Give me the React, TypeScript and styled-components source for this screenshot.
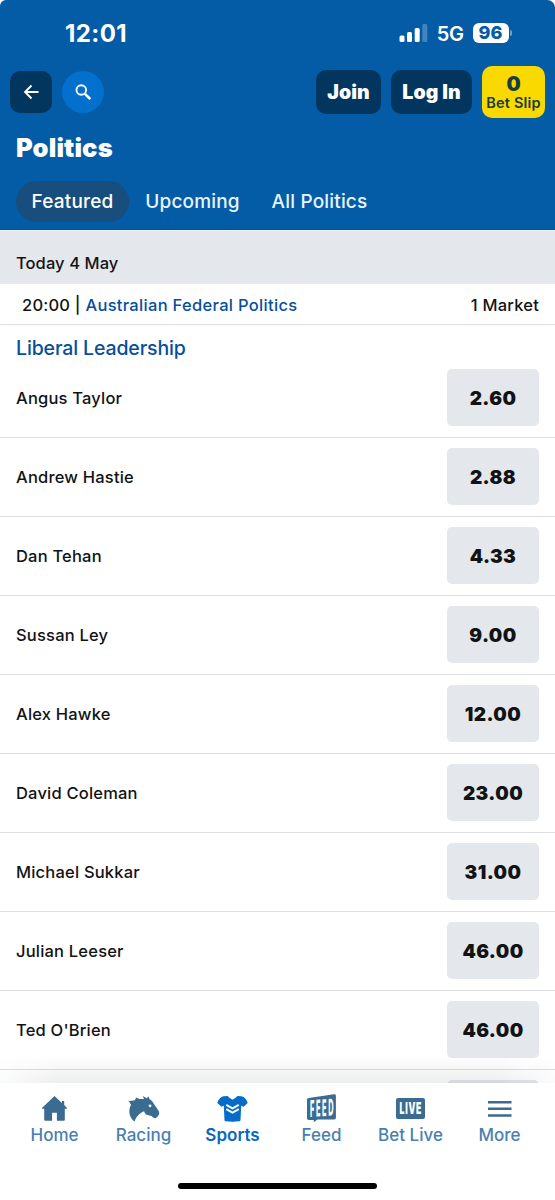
import React from "react";
import styled, { createGlobalStyle } from "styled-components";

const GlobalStyle = createGlobalStyle`
  * { box-sizing: border-box; }
  body { margin: 0; background: #fff; }
  button { font: inherit; border: 0; margin: 0; padding: 0; letter-spacing: inherit; }
`;

const Screen = styled.div`
  width: 555px;
  height: 1200px;
  display: flex;
  flex-direction: column;
  overflow: hidden;
  background: #fff;
  color: #111315;
  font-family: Inter, "Liberation Sans", sans-serif;
  font-weight: 500;
  white-space: nowrap;
`;

const Header = styled.header`
  height: 230px;
  flex: none;
  background: #045ba6;
  border-bottom: 1px solid #034f96;
  border-radius: 6px 8px 0 0;
  color: #fff;
`;

const StatusBar = styled.div`
  height: 66px;
  display: flex;
  align-items: center;
  justify-content: space-between;
  padding: 0 43px 0 65px;
`;

const Clock = styled.div`
  font-size: 24px;
  line-height: 30px;
  font-weight: 700;
  letter-spacing: 0.4px;
  padding-top: 1px;
`;

const StatusRight = styled.div`
  display: flex;
  align-items: center;
`;

const Network = styled.span`
  font-size: 20px;
  line-height: 24px;
  font-weight: 600;
  letter-spacing: -0.4px;
  margin: 2px 9px 0 9px;
`;

const Battery = styled.div`
  width: 36px;
  height: 20px;
  border-radius: 6px;
  background: #fff;
  color: #045ba6;
  font-size: 18px;
  line-height: 20px;
  font-weight: 800;
  text-align: center;
`;

const BatteryTip = styled.div`
  width: 2px;
  height: 6px;
  margin-left: 1.5px;
  border-radius: 0 2px 2px 0;
  background: #6ba3d2;
`;

const Toolbar = styled.div`
  height: 52px;
  display: flex;
  align-items: center;
  padding: 0 10px;
`;

const IconButton = styled.button<{ $round?: boolean }>`
  width: 42px;
  height: 42px;
  display: grid;
  place-items: center;
  margin-right: 10px;
  border-radius: ${(p) => (p.$round ? "50%" : "10px")};
  background: ${(p) => (p.$round ? "#0370cd" : "#03365f")};
  color: #fff;
`;

const AccountButton = styled.button<{ $width: number }>`
  width: ${(p) => p.$width}px;
  height: 44px;
  margin-right: 10px;
  border-radius: 10px;
  background: #03365f;
  color: #fff;
  font-size: 19.5px;
  font-weight: 880;
  letter-spacing: 0.05px;
`;

const Spacer = styled.div`
  flex: 1;
`;

const BetSlip = styled.button`
  width: 63px;
  height: 52px;
  display: flex;
  flex-direction: column;
  align-items: center;
  border-radius: 10px;
  background: #f9d900;
  color: #173c46;
`;

const BetCount = styled.span`
  font-size: 20px;
  line-height: 22px;
  font-weight: 900;
  margin-top: 7px;
`;

const BetLabel = styled.span`
  font-size: 14.5px;
  line-height: 15px;
  font-weight: 580;
  letter-spacing: 0.2px;
`;

const Title = styled.h1`
  margin: 0;
  padding: 14px 16px 0;
  font-size: 25.5px;
  line-height: 32px;
  font-weight: 900;
  letter-spacing: 0.15px;
`;

const Tabs = styled.nav`
  display: flex;
  padding: 17px 16px 0;
  height: 59px;
`;

const Tab = styled.button<{ $active?: boolean; $width: number }>`
  width: ${(p) => p.$width}px;
  height: 41px;
  border-radius: 21px;
  background: ${(p) => (p.$active ? "#174e7d" : "transparent")};
  color: ${(p) => (p.$active ? "#fff" : "#e9f5fd")};
  font-size: 19px;
  font-weight: 530;
  letter-spacing: 0.18px;
`;

const DateBar = styled.div`
  height: 54px;
  flex: none;
  padding: 20px 16px 0;
  background: #e4e7ec;
  border-top: 1px solid #eff5fa;
  font-size: 16.5px;
  font-weight: 550;
  line-height: 24px;
  letter-spacing: 0.08px;
`;

const EventBar = styled.div`
  height: 41px;
  flex: none;
  display: flex;
  align-items: center;
  justify-content: space-between;
  padding: 1px 16px 0 22px;
  border-bottom: 1px solid #dfe1e4;
  font-size: 16.5px;
  font-weight: 550;
  letter-spacing: 0.22px;
`;

const EventLink = styled.a`
  color: #064f9a;
  letter-spacing: 0.31px;
`;

const MarketTitle = styled.h2`
  height: 34px;
  flex: none;
  margin: 0;
  padding: 10px 16px 0;
  color: #064f9a;
  font-size: 19.5px;
  line-height: 26px;
  font-weight: 540;
  letter-spacing: -0.13px;
`;

const Runners = styled.main`
  flex: 1;
  min-height: 0;
  overflow: hidden;
`;

const Runner = styled.div`
  height: 79px;
  display: flex;
  align-items: flex-start;
  justify-content: space-between;
  padding: 10px 16px 0;
  border-bottom: 1px solid #dcdee2;
`;

const RunnerName = styled.span`
  font-size: 16.5px;
  font-weight: 550;
  line-height: 59px;
  letter-spacing: 0.2px;
`;

const Odds = styled.button`
  width: 92px;
  height: 57px;
  padding-top: 1px;
  border-radius: 5px;
  background: #e4e7ec;
  color: #111315;
  font-size: 19px;
  font-weight: 880;
  letter-spacing: 0.4px;
`;

const BottomBar = styled.footer`
  position: relative;
  height: 117px;
  flex: none;
  display: flex;
  flex-direction: column;
  align-items: center;
  background: #fff;

  &::before {
    content: "";
    position: absolute;
    left: 0;
    right: 0;
    top: -28px;
    height: 28px;
    background: linear-gradient(to bottom, rgba(20, 30, 45, 0), rgba(20, 30, 45, 0.075));
    mask-image: linear-gradient(to right, rgba(0, 0, 0, 0.2), #000 55px, #000 500px, rgba(0, 0, 0, 0.2));
  }
`;

const NavItems = styled.nav`
  width: 100%;
  height: 100px;
  display: grid;
  grid-template-columns: repeat(6, 89px);
  padding-left: 10px;
`;

const NavItem = styled.a<{ $active?: boolean }>`
  display: flex;
  flex-direction: column;
  align-items: center;
  padding-top: 9px;
  color: ${(p) => (p.$active ? "#0668c1" : "#497fb0")};
  font-size: 17px;
  line-height: 22px;
  font-weight: ${(p) => (p.$active ? 600 : 530)};

  svg {
    display: block;
    flex: none;
    margin-right: 1px;
    color: ${(p) => (p.$active ? "#056ccb" : "#3c6b92")};
  }
`;

const HomeIndicator = styled.div`
  width: 199px;
  height: 6px;
  border-radius: 3px;
  background: #000;
`;

const SignalIcon = () => (
  <svg width="29" height="18" viewBox="0 0 29 18" fill="#fff">
    <rect x="0.5" y="11.5" width="5" height="6.5" rx="1.5" />
    <rect x="8" y="8" width="5" height="10" rx="1.5" />
    <rect x="15.7" y="4" width="5" height="14" rx="1.5" />
    <rect x="23.3" y="0" width="5" height="18" rx="1.5" opacity="0.25" />
  </svg>
);

const BackIcon = () => (
  <svg width="16" height="16" viewBox="0 0 16 16" fill="none" stroke="#fff" strokeWidth="1.8">
    <path d="M8.5 1.5 2 8 8.5 14.500M2 8H15.500" />
  </svg>
);

const SearchIcon = () => (
  <svg width="17" height="17" viewBox="0 0 17 17" fill="none" stroke="#fff">
    <circle cx="6.3" cy="6" r="4.8" strokeWidth="1.9" />
    <path d="m10 9.900 5.300 5.200" strokeWidth="2.7" />
  </svg>
);

const HomeIcon = () => (
  <svg width="34" height="32" viewBox="0 0 34 32" fill="currentColor">
    <path d="M17.500 4 5.200 15.800c-.4.500-.2 1 .4 1H7.200V27.800c0 .6.300.9.900.9h7v-8h4.800v8h7c.6 0 .9-.3.900-.9V16.800h1.600c.6 0 .8-.5.400-1L27.200 13V9.100h-2.300v1.800Z" />
  </svg>
);

const HorseIcon = () => (
  <svg width="34" height="32" viewBox="0 0 34 32" fill="currentColor">
    <path d="M8.600 29.600C4.500 26.300 3.100 22.500 3.400 18.200c.2-2.200.8-3.900 1.700-5.200L2.300 8.300l1.300.7 5.200-.7L10.300 5.400l3 1.700 4.700-.2L16.700 4l4.200 2.200L22.200 4.200l1.700 3.400c1.500.7 2.600 1.900 3.400 3.400l5.600 8.300c.7 1.700.3 3.300-.9 4.800-1 1.500-2.300 2.400-3.900 2-1.500-.4-1.700-1.700-3.200-2.300-1.800-.7-3.900-.6-5.100-1.600-.9-.7-1.300-1.700-1.600-2.900-3.900 1.300-8.300 5.200-9.600 10.300Z" />
    <circle cx="24" cy="13.800" r="1.400" fill="#fff" />
  </svg>
);

const ShirtIcon = () => (
  <svg width="34" height="32" viewBox="0 0 34 32" fill="currentColor">
    <path d="M8.600 4.200 12.700 4c1.300 1.600 2.900 2.900 4.800 3.500C19.400 6.900 21 5.600 22.300 4l4.100.2c3 .7 5.200 3.100 6.300 6.700L28.600 14.700l-2.400-.9-.7 14.400c-.1.700-.5 1-1.200 1.100-4.500.6-9.100.6-13.600 0-.7-.1-1.100-.4-1.200-1.100L8.800 13.800l-2.400.9L2.300 10.900c1.100-3.600 3.300-6 6.300-6.700Z" />
    <path d="m11.200 12.900 6.300 3.500 6.300-3.500m-12.600 4.200 6.300 3.500 6.300-3.500" fill="none" stroke="#fff" strokeWidth="1.9" />
  </svg>
);

const FeedIcon = () => (
  <svg width="34" height="32" viewBox="0 0 34 32" fill="currentColor">
    <path d="M4.800 6 30 2.300c1.200-.2 1.900.4 1.900 1.600V25.500c0 1.200-.6 1.900-1.800 1.900H13.500l-3.800 2.800.1-2.200H5c-1.300 0-2-.7-2-2V8c0-1.200.6-1.800 1.800-2Z" />
    <g transform="translate(5.900 25) skewY(-4) scale(.32 1)">
      <text x="0" y="0" fill="#fff" fontFamily="Inter, sans-serif" fontWeight="800" fontSize="23" textLength="74" lengthAdjust="spacing">FEED</text>
    </g>
  </svg>
);

const LiveIcon = () => (
  <svg width="34" height="32" viewBox="0 0 34 32" fill="currentColor">
    <rect x="3" y="6" width="29" height="21" rx="2" />
    <g transform="translate(6.500 22) scale(.56 1)">
      <text x="0" y="0" fill="#fff" fontFamily="Inter, sans-serif" fontWeight="900" fontSize="15.500" textLength="39">LIVE</text>
    </g>
  </svg>
);

const MenuIcon = () => (
  <svg width="34" height="32" viewBox="0 0 34 32" fill="currentColor">
    <path d="M6 9h23.500v2.400H6ZM6 15.600h23.500v2.400H6ZM6 22.300h23.500v2.400H6Z" />
  </svg>
);

const runners = [
  ["Angus Taylor", "2.60"],
  ["Andrew Hastie", "2.88"],
  ["Dan Tehan", "4.33"],
  ["Sussan Ley", "9.00"],
  ["Alex Hawke", "12.00"],
  ["David Coleman", "23.00"],
  ["Michael Sukkar", "31.00"],
  ["Julian Leeser", "46.00"],
  ["Ted O'Brien", "46.00"],
  ["", ""],
];

const navItems = [
  { label: "Home", Icon: HomeIcon },
  { label: "Racing", Icon: HorseIcon },
  { label: "Sports", Icon: ShirtIcon, active: true },
  { label: "Feed", Icon: FeedIcon },
  { label: "Bet Live", Icon: LiveIcon },
  { label: "More", Icon: MenuIcon },
];

export default function App() {
  return (
    <Screen>
      <GlobalStyle />
      <Header>
        <StatusBar>
          <Clock>12:01</Clock>
          <StatusRight>
            <SignalIcon />
            <Network>5G</Network>
            <Battery>96</Battery>
            <BatteryTip />
          </StatusRight>
        </StatusBar>
        <Toolbar>
          <IconButton aria-label="Back"><BackIcon /></IconButton>
          <IconButton $round aria-label="Search"><SearchIcon /></IconButton>
          <Spacer />
          <AccountButton $width={65}>Join</AccountButton>
          <AccountButton $width={81}>Log In</AccountButton>
          <BetSlip>
            <BetCount>0</BetCount>
            <BetLabel>Bet Slip</BetLabel>
          </BetSlip>
        </Toolbar>
        <Title>Politics</Title>
        <Tabs>
          <Tab $active $width={113}>Featured</Tab>
          <Tab $width={127}>Upcoming</Tab>
          <Tab $width={127}>All Politics</Tab>
        </Tabs>
      </Header>
      <DateBar>Today 4 May</DateBar>
      <EventBar>
        <span>20:00 | <EventLink>Australian Federal Politics</EventLink></span>
        <span>1 Market</span>
      </EventBar>
      <MarketTitle>Liberal Leadership</MarketTitle>
      <Runners>
        {runners.map(([name, odds], i) => (
          <Runner key={i}>
            <RunnerName>{name}</RunnerName>
            <Odds>{odds}</Odds>
          </Runner>
        ))}
      </Runners>
      <BottomBar>
        <NavItems>
          {navItems.map(({ label, Icon, active }) => (
            <NavItem key={label} $active={active}>
              <Icon />
              {label}
            </NavItem>
          ))}
        </NavItems>
        <HomeIndicator />
      </BottomBar>
    </Screen>
  );
}
